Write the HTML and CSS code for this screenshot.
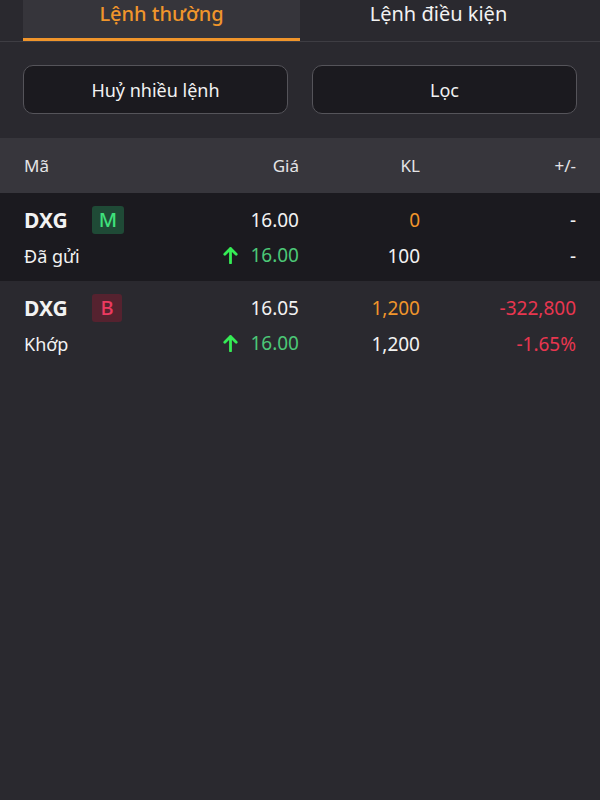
FILE: index.html
```html
<!DOCTYPE html>
<html lang="vi">
<head>
  <meta charset="UTF-8">
  <title>Sổ lệnh</title>
  <link rel="stylesheet" href="styles.css">
</head>
<body>

<!-- TABS -->
<div class="tabs">
  <div class="tab active">Lệnh thường</div>
  <div class="tab">Lệnh điều kiện</div>
</div>

<!-- ACTIONS -->
<div class="actions">
  <button class="btn">Huỷ nhiều lệnh</button>
  <button class="btn">Lọc</button>
</div>

<!-- ORDER TABLE -->
<div class="table">
  <div class="row head">
    <div class="code">Mã</div>
    <div class="num">Giá</div>
    <div class="num">KL</div>
    <div class="num">+/-</div>
  </div>

  <div class="row order dark">
    <div class="code"><strong>DXG</strong><span class="badge badge-m">M</span></div>
    <div class="num">16.00</div>
    <div class="num orange">0</div>
    <div class="num">-</div>

    <div class="code status">Đã gửi</div>
    <div class="num green"><span class="arrow">
      <svg width="15" height="18" viewBox="0 0 15 18"><path d="M7.5 17V2.5M1.8 8.2L7.5 2.5l5.7 5.7" fill="none" stroke="#35ec55" stroke-width="2.8" stroke-linecap="round" stroke-linejoin="round"/></svg>
    </span>16.00</div>
    <div class="num">100</div>
    <div class="num">-</div>
  </div>

  <div class="row order">
    <div class="code"><strong>DXG</strong><span class="badge badge-b">B</span></div>
    <div class="num">16.05</div>
    <div class="num orange">1,200</div>
    <div class="num red">-322,800</div>

    <div class="code status">Khớp</div>
    <div class="num green"><span class="arrow">
      <svg width="15" height="18" viewBox="0 0 15 18"><path d="M7.5 17V2.5M1.8 8.2L7.5 2.5l5.7 5.7" fill="none" stroke="#35ec55" stroke-width="2.8" stroke-linecap="round" stroke-linejoin="round"/></svg>
    </span>16.00</div>
    <div class="num">1,200</div>
    <div class="num red">-1.65%</div>
  </div>
</div>

</body>
</html>
```

FILE: styles.css
```css
* {
  margin: 0;
  padding: 0;
  box-sizing: border-box;
}

body {
  font-family: "Noto Sans", sans-serif;
  background-color: #2a292f;
  color: #f2f2f2;
  height: 800px;
}

.tabs {
  display: flex;
  padding: 0 23px;
  height: 42px;
  border-bottom: 1px solid #3e3d43;
}

.tab {
  flex: 1;
  text-align: center;
  font-size: 20px;
  line-height: 28px;
  color: #f2f2f2;
}

.tab.active {
  background: #36353b;
  color: #f0952b;
  font-weight: 500;
  border-bottom: 3px solid #f0952b;
}

.actions {
  display: flex;
  gap: 24px;
  padding: 23px 23px 24px;
}

.btn {
  flex: 1;
  height: 49px;
  background: #1b1a1f;
  border: 1px solid #55545a;
  border-radius: 10px;
  color: #f2f2f2;
  font-family: inherit;
  font-size: 18px;
}

.row {
  display: grid;
  grid-template-columns: 150px 125px 121px 156px;
  padding: 0 24px;
  align-items: center;
}

.row.head {
  height: 55px;
  background: #37363c;
  font-size: 17px;
  color: #e4e4e6;
}

.row.order {
  grid-auto-rows: 36px;
  padding-top: 9px;
  padding-bottom: 7px;
  font-size: 19px;
}

.row.dark {
  background: #1b1a1f;
}

.num {
  text-align: right;
}

.code {
  display: flex;
  align-items: center;
}

.code strong {
  font-size: 21px;
  font-weight: 700;
  width: 68px;
}

.status {
  font-size: 18px;
}

.badge {
  display: inline-block;
  width: 32px;
  height: 28px;
  line-height: 28px;
  border-radius: 3px;
  text-align: center;
  font-size: 20px;
  font-weight: 500;
}

.badge-m {
  background: #1f4a36;
  color: #3fe27c;
}

.badge-b {
  width: 30px;
  background: #55222f;
  color: #ec3a60;
}

.arrow {
  display: inline-block;
  margin-right: 12px;
  vertical-align: -2px;
}

.green {
  color: #4cc877;
}

.orange {
  color: #f0952b;
}

.red {
  color: #e8364f;
}
```
